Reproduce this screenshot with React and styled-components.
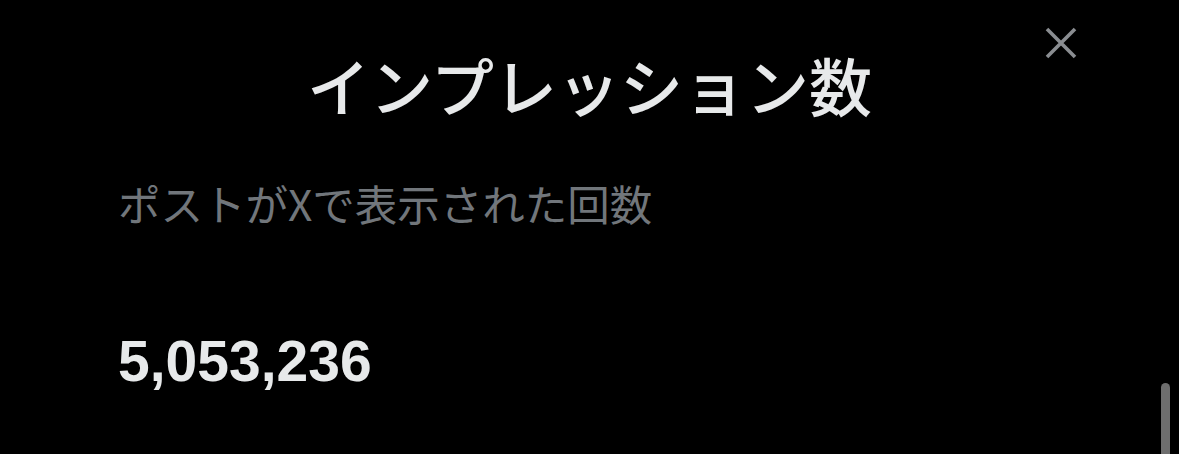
import React from "react";
import styled, { createGlobalStyle } from "styled-components";

const Global = createGlobalStyle`
  html, body { margin: 0; padding: 0; background: #000; }
  body { width: 1179px; height: 454px; overflow: hidden; }
`;

const Page = styled.div`
  position: relative;
  width: 1179px;
  height: 454px;
  background: #000;
  display: flex;
  flex-direction: column;
  box-sizing: border-box;
  padding: 0 118px;
  font-family: "Noto Sans CJK JP", "Noto Sans", sans-serif;
`;

const Header = styled.header`
  display: flex;
  justify-content: center;
  padding-top: 39px;
  height: 90px;
`;

const Title = styled.h1`
  margin: 0;
  font-size: 63px;
  line-height: 90px;
  font-weight: 500;
  color: #e7e9ea;
  letter-spacing: 0;
`;

const CloseButton = styled.button`
  position: absolute;
  top: 26px;
  left: 1044px;
  width: 34px;
  height: 34px;
  padding: 0;
  border: none;
  background: transparent;
  display: flex;
  align-items: center;
  justify-content: center;
`;

const Subtitle = styled.p`
  margin: 44px 0 0;
  font-size: 42.5px;
  line-height: 60px;
  font-weight: 400;
  color: #71767b;
`;

const Count = styled.div`
  margin-top: 96px;
  font-family: "Liberation Sans", Arial, sans-serif;
  font-size: 57px;
  line-height: 64px;
  font-weight: 700;
  color: #e7e9ea;
`;

const ScrollThumb = styled.div`
  position: absolute;
  left: 1161px;
  top: 383px;
  width: 9px;
  height: 90px;
  border-radius: 5px;
  background: #6e6e6e;
`;

export default function App() {
  return (
    <>
      <Global />
      <Page>
        <Header>
          <Title>インプレッション数</Title>
        </Header>
        <CloseButton aria-label="閉じる">
          <svg width="34" height="34" viewBox="0 0 34 34">
            <path d="M3 3 L31 31 M31 3 L3 31" stroke="#8a8d91" strokeWidth="3.6" strokeLinecap="butt" />
          </svg>
        </CloseButton>
        <Subtitle>ポストがXで表示された回数</Subtitle>
        <Count>5,053,236</Count>
        <ScrollThumb />
      </Page>
    </>
  );
}
